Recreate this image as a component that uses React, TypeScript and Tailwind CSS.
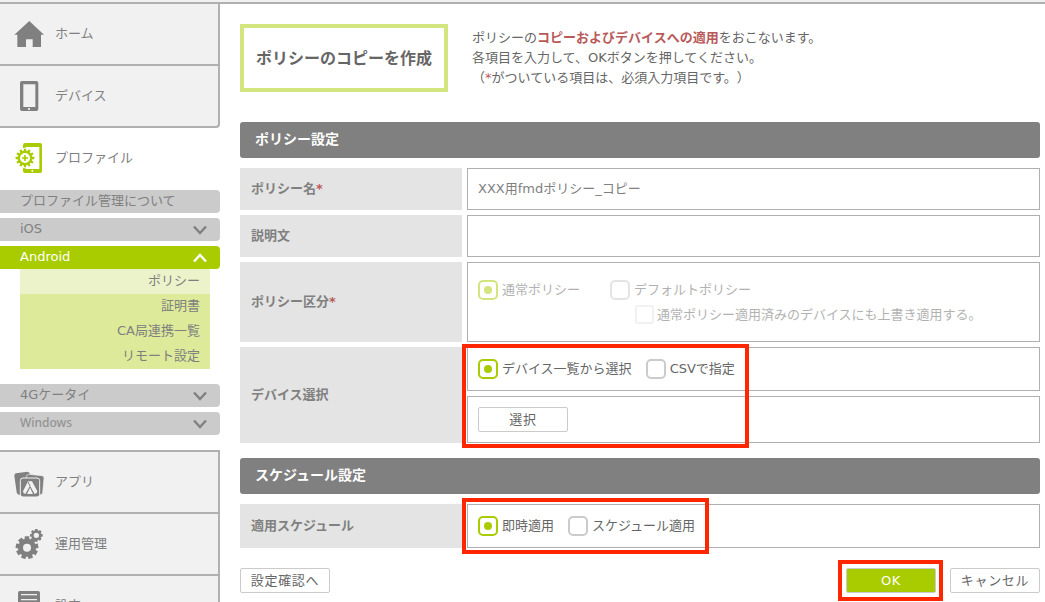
import { useState } from 'react';
import type { ReactNode } from 'react';

type GearProps = { cx: number; cy: number; r: number; hole: number; teeth: number; toothWidth: number };

function Gear({ cx, cy, r, hole, teeth, toothWidth }: GearProps) {
    const body = r * 0.8;

    return (
        <g fill="currentColor">
            <path
                fillRule="evenodd"
                d={`M${cx - body} ${cy}a${body} ${body} 0 1 0 ${body * 2} 0a${body} ${body} 0 1 0 ${-body * 2} 0ZM${cx - hole} ${cy}a${hole} ${hole} 0 1 0 ${hole * 2} 0a${hole} ${hole} 0 1 0 ${-hole * 2} 0Z`}
            />
            {Array.from({ length: teeth }, (_, i) => (
                <rect
                    key={i}
                    x={cx - toothWidth / 2}
                    y={cy - r}
                    width={toothWidth}
                    height={r * 0.3}
                    rx="1"
                    transform={`rotate(${(360 / teeth) * i} ${cx} ${cy})`}
                />
            ))}
        </g>
    );
}

function MenuIcon({ children }: { children: ReactNode }) {
    return (
        <svg viewBox="0 0 90 90" className="size-[30px] shrink-0" aria-hidden="true">
            {children}
        </svg>
    );
}

const icons = {
    home: <path fill="currentColor" d="M46 6L90 47H81V84H56V61H36V84H10V47H1Z" />,
    device: (
        <>
            <path fill="currentColor" fillRule="evenodd" d="M24 0H67Q73 0 73 6V84Q73 90 67 90H24Q18 90 18 84V6Q18 0 24 0ZM28 10V78H64V10Z" />
            <circle cx="45" cy="84" r="3" fill="#fff" />
        </>
    ),
    profile: (
        <>
            <path fill="currentColor" fillRule="evenodd" d="M33 0H78Q84 0 84 6V84Q84 90 78 90H33Q27 90 27 84V6Q27 0 33 0ZM35 12V78H76V12Z" />
            <circle cx="55" cy="84" r="3" fill="#fff" />
            <circle cx="33" cy="45" r="31" fill="#fff" />
            <Gear cx={33} cy={45} r={28} hole={15} teeth={12} toothWidth={7} />
            <path d="M33 36V54M24 45H42" stroke="currentColor" strokeWidth="5" />
        </>
    ),
    apps: (
        <>
            <path fill="currentColor" d="M6 19L40 14Q47 14 48 22L50 80L14 83Q9 82 8 76L1 26Q1 20 6 19Z" />
            <path fill="currentColor" stroke="#f1f1f1" strokeWidth="2" d="M44 22L84 26Q91 27 90 34L86 78Q85 83 79 83L36 80L37 29Q38 22 44 22Z" />
            <rect x="19" y="33" width="58" height="57" rx="8" fill="currentColor" stroke="#f1f1f1" strokeWidth="3" />
            <path fill="#f1f1f1" d="M42 43H54L70 73Q70 80 62 81L48 56L34 81Q27 80 27 73Z" />
            <path fill="#f1f1f1" d="M48 62L57 81H39Z" />
            <path d="M42 45L48 57" stroke="currentColor" strokeWidth="3" />
        </>
    ),
    operation: (
        <>
            <Gear cx={39} cy={56} r={34} hole={12} teeth={9} toothWidth={14} />
            <Gear cx={67} cy={19} r={19} hole={8} teeth={8} toothWidth={8} />
        </>
    ),
    settings: (
        <>
            <rect x="12" y="0" width="66" height="90" rx="5" fill="currentColor" />
            <path d="M21 11H69M21 26H69M21 41H69M21 56H69" stroke="#f1f1f1" strokeWidth="4" />
        </>
    ),
};

function Chevron({ up = false }: { up?: boolean }) {
    return (
        <svg viewBox="0 0 14 10" className={`h-[10px] w-[14px] ${up ? 'rotate-180' : ''}`} fill="none" aria-hidden="true">
            <path d="M1 1.5L7 8L13 1.5" stroke="currentColor" strokeWidth="2.4" />
        </svg>
    );
}

function MenuItem({ icon, label, className = '' }: { icon: ReactNode; label: string; className?: string }) {
    return (
        <a href="#" className={`flex h-[62px] items-center gap-[11px] border-r-2 border-b-2 border-[#b0b0b0] bg-[#f1f1f1] pl-[14px] text-[#808080] ${className}`}>
            <MenuIcon>{icon}</MenuIcon>
            {label}
        </a>
    );
}

const androidItems = ['ポリシー', '証明書', 'CA局連携一覧', 'リモート設定'];

const barClass = 'flex h-[23px] w-full items-center justify-between rounded-r pr-[13px] pl-5';
const barTextClass = 'pb-0.5';

function Sidebar() {
    const [androidOpen, setAndroidOpen] = useState(true);

    return (
        <nav className="w-[220px] shrink-0">
            <MenuItem icon={icons.home} label="ホーム" />
            <MenuItem icon={icons.device} label="デバイス" className="rounded-br" />
            <a href="#" className="flex h-[62px] items-center gap-[11px] pb-0.5 pl-[14px] text-[#808080]">
                <span className="text-[#a9cc00]">
                    <MenuIcon>{icons.profile}</MenuIcon>
                </span>
                プロファイル
            </a>

            <div className="flex flex-col gap-[5px] text-[#808080]">
                <a href="#" className={`${barClass} bg-[#cbcbcb]`}>
                    <span className={barTextClass}>プロファイル管理について</span>
                </a>
                <button type="button" className={`${barClass} bg-[#cbcbcb]`}>
                    <span className={barTextClass}>iOS</span>
                    <Chevron />
                </button>
                <div>
                    <button type="button" onClick={() => setAndroidOpen(!androidOpen)} className={`${barClass} bg-[#a9cc00] text-white`}>
                        <span className={barTextClass}>Android</span>
                        <Chevron up={androidOpen} />
                    </button>
                    {androidOpen && (
                        <ul className="mr-[10px] mb-[10px] ml-5 bg-[#dcea9a] text-right">
                            {androidItems.map((item, i) => (
                                <li key={item} className={i === 0 ? 'bg-[#ecf3cb]' : ''}>
                                    <a href="#" className="block h-[25px] pr-[10px] leading-6">
                                        {item}
                                    </a>
                                </li>
                            ))}
                        </ul>
                    )}
                </div>
                <button type="button" className={`${barClass} bg-[#cbcbcb]`}>
                    <span className={barTextClass}>4Gケータイ</span>
                    <Chevron />
                </button>
                <button type="button" className={`${barClass} bg-[#cbcbcb]`}>
                    <span className={`${barTextClass} font-['Noto_Sans',sans-serif] text-xs font-medium text-[#939393]`}>Windows</span>
                    <Chevron />
                </button>
            </div>

            <div className="mt-[15px] border-t-2 border-[#b0b0b0]">
                <MenuItem icon={icons.apps} label="アプリ" />
                <MenuItem icon={icons.operation} label="運用管理" />
                <MenuItem icon={icons.settings} label="設定" />
            </div>
        </nav>
    );
}

type ChoiceProps = {
    type?: 'radio' | 'checkbox';
    name: string;
    label: string;
    defaultChecked?: boolean;
    disabled?: boolean;
};

function Choice({ type = 'radio', name, label, defaultChecked, disabled }: ChoiceProps) {
    const shape = type === 'radio' ? 'size-5 rounded-[5px] border-[#cbcbcb]' : 'size-[19px] rounded-[3px] border-[#e4e4e4]';

    return (
        <label className={`flex items-center ${type === 'radio' ? 'gap-1' : 'gap-[3px]'} ${disabled ? 'opacity-50' : ''}`}>
            <input
                type={type}
                name={name}
                defaultChecked={defaultChecked}
                disabled={disabled}
                className={`grid appearance-none place-content-center border-2 bg-white before:size-2 before:rounded-full checked:border-[#a9cc00] checked:before:bg-[#a9cc00] ${shape}`}
            />
            {label}
        </label>
    );
}

function SectionTitle({ children }: { children: ReactNode }) {
    return <h2 className="flex h-9 items-center rounded-[3px] bg-[#808080] px-[15px] pb-0.5 text-sm font-bold text-white">{children}</h2>;
}

function Row({ label, htmlFor, required, children }: { label: string; htmlFor?: string; required?: boolean; children: ReactNode }) {
    const Tag = htmlFor ? 'label' : 'div';

    return (
        <div className="flex gap-[5px]">
            <Tag htmlFor={htmlFor} className="flex w-[222px] shrink-0 items-center bg-[#e4e4e4] pl-[11px] font-bold text-[#808080]">
                {label}
                {required && <span className="text-[#bb5a5a]">*</span>}
            </Tag>
            <div className="flex min-w-0 flex-1 flex-col gap-[5px]">{children}</div>
        </div>
    );
}

function Highlight({ className }: { className: string }) {
    return <span className={`pointer-events-none absolute border-4 border-[#ff2600] ${className}`} />;
}

const fieldClass = 'w-full border border-[#b0b0b0] bg-white px-[10px]';
const buttonClass = 'h-[25px] w-[90px] rounded-[2px] border border-[#cbcbcb] tracking-wider';

export default function App() {
    return (
        <div className="h-screen overflow-hidden bg-white font-['DejaVu_Sans','Noto_Sans_CJK_JP',sans-serif] text-[13px] leading-5 text-[#666]">
            <header className="h-1 border-b-2 border-[#b0b0b0] bg-[#f1f1f1]" />
            <div className="flex gap-5">
                <Sidebar />

                <main className="min-w-0 flex-1 pt-5 pr-[5px]">
                    <div className="flex items-center gap-6">
                        <h1 className="flex h-[68px] w-[208px] shrink-0 items-center justify-center border-4 border-[#d3e57f] pt-0.5 text-base font-bold">
                            ポリシーのコピーを作成
                        </h1>
                        <p className="[text-spacing-trim:space-all]">
                            ポリシーの<strong className="text-[#b85a5a]">コピーおよびデバイスへの適用</strong>をおこないます。
                            <br />
                            各項目を入力して、OKボタンを押してください。
                            <br />
                            （<span className="text-[#b85a5a]">*</span>がついている項目は、必須入力項目です。）
                        </p>
                    </div>

                    <form onSubmit={(e) => e.preventDefault()} className="mt-[30px]">
                        <SectionTitle>ポリシー設定</SectionTitle>
                        <div className="mt-[10px] flex flex-col gap-[5px]">
                            <Row label="ポリシー名" htmlFor="policy-name" required>
                                <input id="policy-name" type="text" defaultValue="XXX用fmdポリシー_コピー" className={`${fieldClass} h-[42px] pb-1 text-[#808080]`} />
                            </Row>
                            <Row label="説明文" htmlFor="description">
                                <input id="description" type="text" className={`${fieldClass} h-[42px] pb-1 text-[#808080]`} />
                            </Row>
                            <Row label="ポリシー区分" required>
                                <div className={`${fieldClass} flex h-20 flex-col justify-center gap-[5px]`}>
                                    <div className="flex gap-[30px]">
                                        <Choice name="kind" label="通常ポリシー" defaultChecked disabled />
                                        <Choice name="kind" label="デフォルトポリシー" disabled />
                                    </div>
                                    <div className="pl-[157px]">
                                        <Choice type="checkbox" name="overwrite" label="通常ポリシー適用済みのデバイスにも上書き適用する。" disabled />
                                    </div>
                                </div>
                            </Row>
                            <Row label="デバイス選択">
                                <div className="relative flex flex-col gap-[5px]">
                                    <div className={`${fieldClass} flex h-11 items-center gap-[14px]`}>
                                        <Choice name="target" label="デバイス一覧から選択" defaultChecked />
                                        <Choice name="target" label="CSVで指定" />
                                    </div>
                                    <div className={`${fieldClass} flex h-[47px] items-center`}>
                                        <button type="button" className={buttonClass}>
                                            選択
                                        </button>
                                    </div>
                                    <Highlight className="-top-[3px] -bottom-[5px] -left-[5px] w-[287px]" />
                                </div>
                            </Row>
                        </div>

                        <div className="mt-[15px]">
                            <SectionTitle>スケジュール設定</SectionTitle>
                        </div>
                        <div className="mt-[10px]">
                            <Row label="適用スケジュール">
                                <div className={`${fieldClass} relative flex h-11 items-center gap-[14px]`}>
                                    <Choice name="schedule" label="即時適用" defaultChecked />
                                    <Choice name="schedule" label="スケジュール適用" />
                                    <Highlight className="-top-[7px] -bottom-[7px] -left-[6px] w-[247px]" />
                                </div>
                            </Row>
                        </div>

                        <div className="mt-5 flex items-center justify-between">
                            <button type="button" className={buttonClass}>
                                設定確認へ
                            </button>
                            <div className="flex gap-[14px]">
                                <div className="relative flex">
                                    <button type="submit" className={`${buttonClass} bg-[#a9cc00] text-white`}>
                                        OK
                                    </button>
                                    <Highlight className="-top-2 -right-[7px] -bottom-2 -left-2" />
                                </div>
                                <button type="button" className={buttonClass}>
                                    キャンセル
                                </button>
                            </div>
                        </div>
                    </form>
                </main>
            </div>
        </div>
    );
}
